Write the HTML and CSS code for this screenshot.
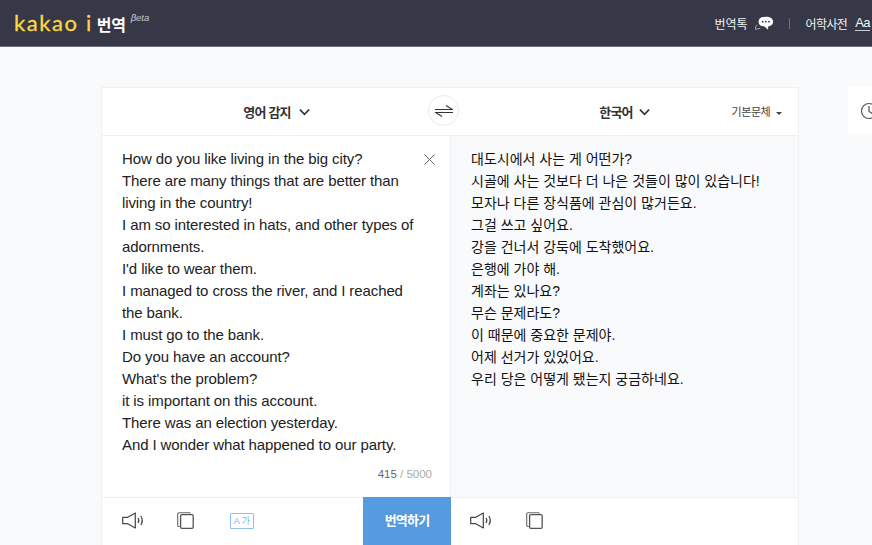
FILE: index.html
```html
<!DOCTYPE html>
<html lang="ko">
<head>
    <meta charset="UTF-8">
    <meta name="viewport" content="width=device-width, initial-scale=1.0">
    <title>kakao i 번역</title>
    <link rel="stylesheet" href="styles.css">
</head>
<body>

    <header class="top-bar">
        <div class="brand">
            <span class="brand-logo">kakao i</span>
            <span class="brand-name">번역</span>
            <span class="brand-beta">βeta</span>
        </div>
        <nav class="top-links">
            <a class="top-link">번역톡
                <svg class="talk-icon" width="20" height="17" viewBox="0 0 22 18">
                    <path d="M7 14.500c-2 .2-4-.3-5 1.500 0-1.500-.5-2.500-.2-3.500.3-1 1-1.500 2-2" fill="none" stroke="#aeb0ba" stroke-width="1"/>
                    <path d="M5 7c0-3.500 3-5.500 8-5.500S21 3.500 21 7c0 3-2.500 5-5.500 5.200L15.500 16l-4-3.800C8 12.200 5 10.500 5 7z" fill="#fff"/>
                    <circle cx="9.500" cy="7" r="1" fill="#363848"/>
                    <circle cx="13" cy="7" r="1" fill="#363848"/>
                    <circle cx="16.500" cy="7" r="1" fill="#363848"/>
                </svg>
            </a>
            <span class="top-sep"></span>
            <a class="top-link">어학사전 <span class="aa">Aa</span></a>
        </nav>
    </header>

    <main class="page">
        <section class="translator">
            <div class="lang-bar">
                <div class="lang">영어 감지
                    <svg class="chevron" width="11" height="8" viewBox="0 0 12 8"><path d="M1 1.500l5 5 5-5" fill="none" stroke="#333" stroke-width="1.800"/></svg>
                </div>
                <div class="lang lang-target">한국어
                    <svg class="chevron" width="11" height="8" viewBox="0 0 12 8"><path d="M1 1.500l5 5 5-5" fill="none" stroke="#333" stroke-width="1.800"/></svg>
                </div>
                <button class="swap">
                    <svg width="18" height="12" viewBox="0 0 18 12"><path d="M0 4.500h17.500L11 .5M18 7.500H.5L7 11.500" fill="none" stroke="#333" stroke-width="1.100"/></svg>
                </button>
                <div class="font-select">기본문체 <span class="caret"></span></div>
            </div>

            <div class="panes">
                <div class="pane pane-source">
                    <div class="source-body">
                        <p class="text text-en">How do you like living in the big city?<br>There are many things that are better than living in the country!<br>I am so interested in hats, and other types of adornments.<br>I'd like to wear them.<br>I managed to cross the river, and I reached the bank.<br>I must go to the bank.<br>Do you have an account?<br>What's the problem?<br>it is important on this account.<br>There was an election yesterday.<br>And I wonder what happened to our party.</p>
                        <svg class="clear" width="11" height="11" viewBox="0 0 11 11"><path d="M.5.5l10 10M10.500.5l-10 10" stroke="#666" stroke-width="1" fill="none"/></svg>
                        <div class="count"><b>415</b> / 5000</div>
                    </div>
                    <div class="tools">
                        <svg class="tool" width="23" height="17" viewBox="0 0 23 17"><use href="#speaker"/></svg>
                        <svg class="tool" width="17" height="17" viewBox="0 0 17 17"><use href="#copy"/></svg>
                        <span class="tool ak">A 가</span>
                        <button class="translate">번역하기</button>
                    </div>
                </div>
                <div class="pane pane-target">
                    <div class="target-body">
                        <p class="text text-ko">대도시에서 사는 게 어떤가?<br>시골에 사는 것보다 더 나은 것들이 많이 있습니다!<br>모자나 다른 장식품에 관심이 많거든요.<br>그걸 쓰고 싶어요.<br>강을 건너서 강둑에 도착했어요.<br>은행에 가야 해.<br>계좌는 있나요?<br>무슨 문제라도?<br>이 때문에 중요한 문제야.<br>어제 선거가 있었어요.<br>우리 당은 어떻게 됐는지 궁금하네요.</p>
                    </div>
                    <div class="tools tools-target">
                        <svg class="tool" width="23" height="17" viewBox="0 0 23 17"><use href="#speaker"/></svg>
                        <svg class="tool" width="17" height="17" viewBox="0 0 17 17"><use href="#copy"/></svg>
                    </div>
                </div>
            </div>
        </section>

        <aside class="history">
            <svg width="24" height="18" viewBox="0 0 24 18"><circle cx="10" cy="9" r="7.500" fill="none" stroke="#555" stroke-width="1.200"/><path d="M10 4v5.500l3.500 2" fill="none" stroke="#555" stroke-width="1.200"/></svg>
        </aside>
    </main>

    <svg class="defs" width="0" height="0">
        <symbol id="speaker" viewBox="0 0 23 17">
            <path d="M.7 5.300h5L13.300 1v15L5.700 11.700h-5z" fill="none" stroke="#444" stroke-width="1.200" stroke-linejoin="round"/>
            <path d="M16 6c1 1.500 1 3.500 0 5M18.800 4c1.800 2.700 1.800 6.300 0 9" fill="none" stroke="#444" stroke-width="1.200"/>
        </symbol>
        <symbol id="copy" viewBox="0 0 17 17">
            <path d="M2.800 14.500H2c-.8 0-1.300-.5-1.300-1.300V2C.7 1.200 1.200.7 2 .7h10.500c.5 0 .8.200 1 .8" fill="none" stroke="#666" stroke-width="1.100"/>
            <rect x="3.600" y="2.600" width="12.600" height="13.700" rx="1.200" fill="#fff" stroke="#555" stroke-width="1.300"/>
        </symbol>
    </svg>

</body>
</html>
```

FILE: styles.css
```css
* {
    box-sizing: border-box;
}

html, body {
    height: 545px;
    overflow: hidden;
}

body {
    margin: 0;
    background-color: #f9fafc;
    color: #222;
    font-family: "Liberation Sans", "Noto Sans CJK KR", sans-serif;
}

.defs {
    display: block;
    height: 0;
}

.top-bar {
    display: flex;
    justify-content: space-between;
    align-items: center;
    height: 47px;
    padding: 0 0 0 14px;
    background-color: #363848;
    border-bottom: 1px solid #6d6f7e;
}

.brand {
    display: flex;
    align-items: baseline;
    margin-top: -2px;
}

.brand-logo {
    color: #f9d93f;
    font-family: "Lato", sans-serif;
    font-size: 22px;
    letter-spacing: 1.600px;
    -webkit-text-stroke: .3px #f9d93f;
}

.brand-name {
    margin-left: 4px;
    color: #fff;
    font-size: 16px;
    font-weight: bold;
    letter-spacing: -.3px;
}

.brand-beta {
    align-self: flex-start;
    margin: 3px 0 0 5px;
    color: #c8c9d0;
    font-size: 9.500px;
    font-style: italic;
}

.top-links {
    display: flex;
    align-items: center;
    margin-right: 2px;
    color: #f4f4f4;
    font-size: 12px;
}

.top-link {
    display: flex;
    align-items: center;
    gap: 6px;
    white-space: nowrap;
}

.top-sep {
    width: 1px;
    height: 11px;
    margin: 0 16px 0 15px;
    background-color: #6d6f7e;
}

.top-link:last-child {
    gap: 8px;
    letter-spacing: -.6px;
}

.aa {
    border-bottom: 1px solid #ccc;
    font-size: 13px;
    line-height: 14px;
}

.page {
    display: flex;
    align-items: flex-start;
    padding: 40px 0 0 101px;
}

.translator {
    flex: none;
    width: 698px;
    background-color: #fff;
    border: 1px solid #eef0f4;
}

.lang-bar {
    display: grid;
    grid-template-columns: 349px 1fr;
    position: relative;
    height: 48px;
    border-bottom: 1px solid #eef0f4;
    align-items: center;
}

.lang {
    display: flex;
    justify-content: center;
    align-items: center;
    gap: 8px;
    color: #333;
    font-size: 13px;
    font-weight: bold;
    letter-spacing: -.8px;
}

.lang-target {
    gap: 6px;
}

.swap {
    position: absolute;
    left: 326px;
    top: 7px;
    width: 31px;
    height: 31px;
    padding: 0;
    display: flex;
    align-items: center;
    justify-content: center;
    background-color: #fff;
    border: 1px solid #eaeaea;
    border-radius: 50%;
}

.font-select {
    position: absolute;
    right: 16px;
    top: 15px;
    color: #444;
    font-size: 11px;
    letter-spacing: -.4px;
    white-space: nowrap;
}

.caret {
    display: inline-block;
    margin-left: 3px;
    vertical-align: middle;
    border: 3px solid transparent;
    border-top-color: #444;
    border-bottom: 0;
}

.panes {
    display: flex;
    height: 409px;
}

.pane {
    display: flex;
    flex-direction: column;
}

.pane-source {
    width: 349px;
}

.pane-target {
    flex: 1;
}

.source-body {
    position: relative;
    height: 361px;
    padding: 12px 30px 0 20px;
    border-right: 1px solid #eef0f4;
}

.target-body {
    height: 361px;
    padding: 12px 20px 0 20px;
    background-color: #f9fafc;
}

.text {
    margin: 0;
    line-height: 22px;
    color: #222;
}

.text-en {
    font-size: 15px;
    letter-spacing: -.1px;
}

.text-ko {
    font-size: 14px;
    color: #111;
}

.clear {
    position: absolute;
    top: 18px;
    right: 15px;
}

.count {
    position: absolute;
    right: 18px;
    bottom: 17px;
    color: #aaa;
    font-size: 11.500px;
}

.count b {
    color: #666;
    font-weight: normal;
}

.tools {
    display: flex;
    align-items: center;
    gap: 32px;
    flex: 1;
    padding-left: 20px;
    border-top: 1px solid #eef0f4;
}

.tools-target {
    gap: 33px;
    padding-left: 19px;
}

.tool {
    flex: none;
    margin-bottom: 2px;
}

.ak {
    width: 24px;
    height: 16px;
    margin-left: 4px;
    border: 1px solid #8fc0f0;
    border-radius: 1px;
    color: #7db3ea;
    font-size: 9px;
    line-height: 14px;
    text-align: center;
    white-space: nowrap;
}

.translate {
    margin-left: auto;
    align-self: stretch;
    width: 88px;
    margin-top: -1px;
    padding-bottom: 4px;
    background-color: #559bdf;
    border: none;
    color: #fff;
    font-family: inherit;
    font-size: 13px;
    font-weight: bold;
    letter-spacing: -.8px;
}

.history {
    flex: none;
    display: flex;
    align-items: center;
    width: 24px;
    height: 47px;
    margin-left: 49px;
    padding-left: 11px;
    overflow: hidden;
    background-color: #fff;
}

.history svg {
    flex: none;
}
```
